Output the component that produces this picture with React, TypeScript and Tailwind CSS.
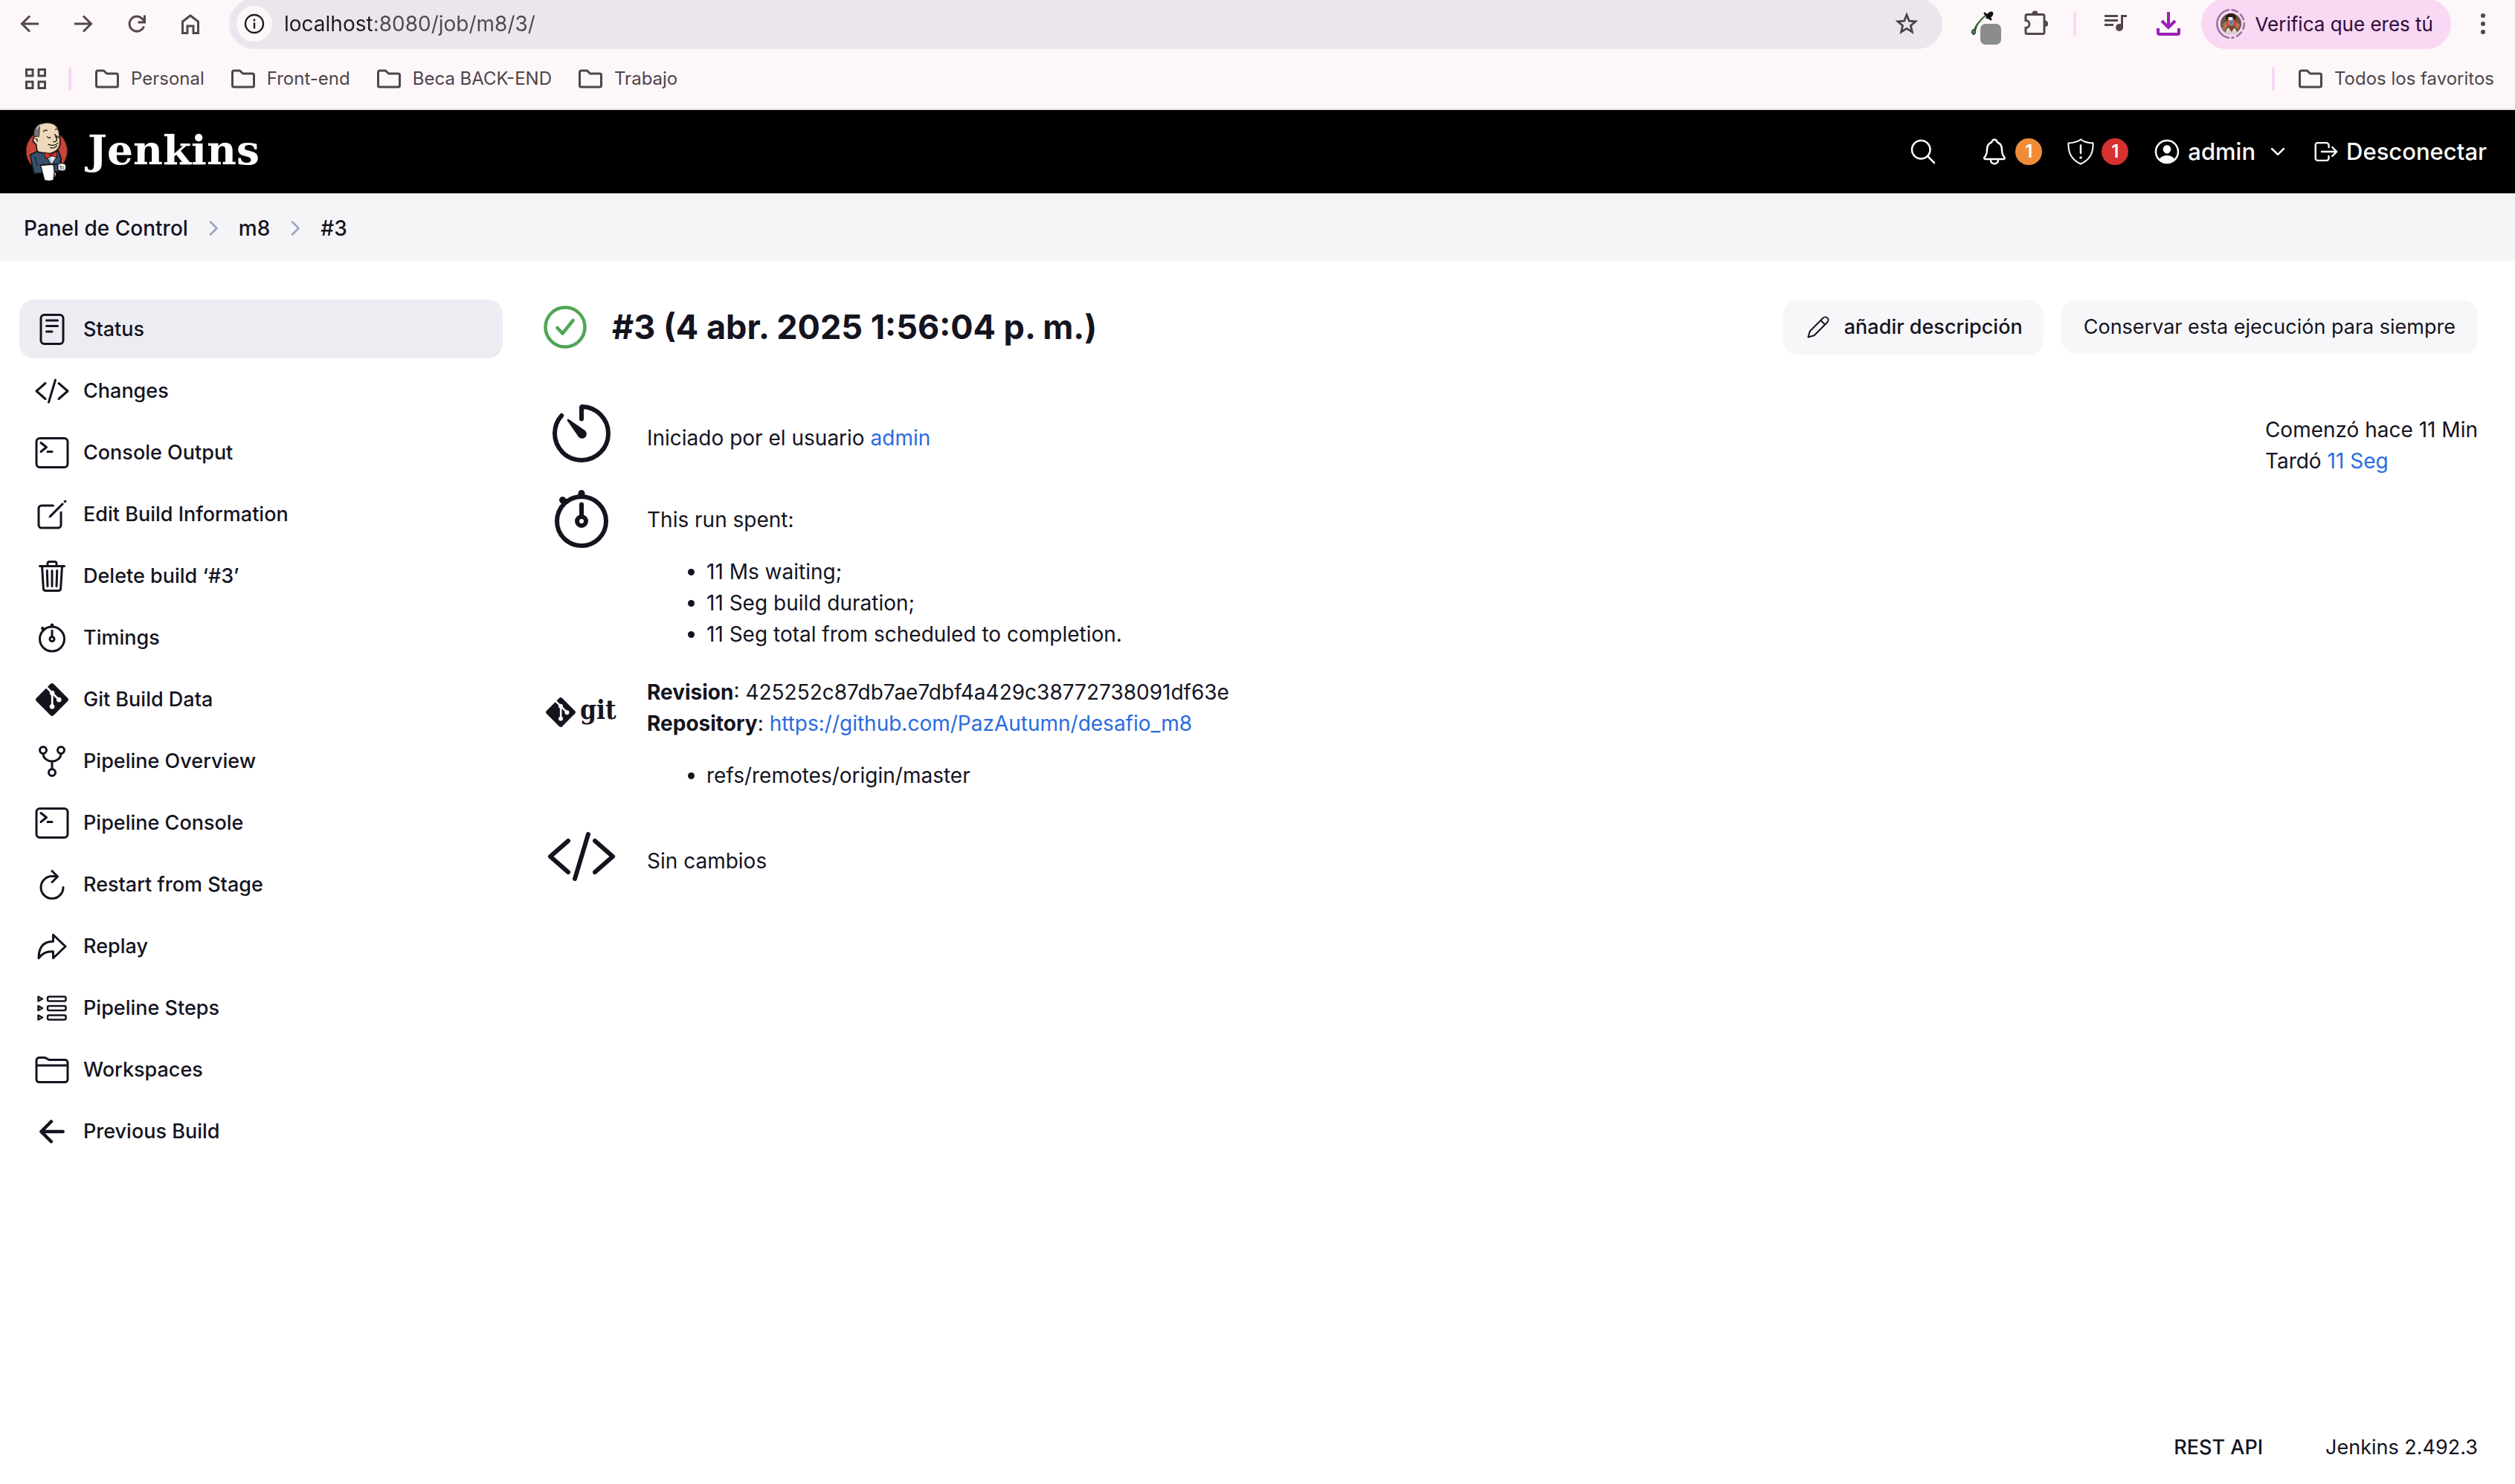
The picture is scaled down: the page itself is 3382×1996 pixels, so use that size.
import React from 'react';
import {
  IoArrowBack,
  IoArrowRedoOutline,
  IoChevronDown,
  IoCodeSlashOutline,
  IoCreateOutline,
  IoFolderOutline,
  IoGitNetworkOutline,
  IoLogOutOutline,
  IoNotificationsOutline,
  IoPersonCircleOutline,
  IoReaderOutline,
  IoRefreshOutline,
  IoSearchOutline,
  IoStopwatchOutline,
  IoTerminalOutline,
  IoTimerOutline,
  IoTrashOutline,
} from 'react-icons/io5';
import { SiGit } from 'react-icons/si';

/* ---------- Browser chrome icons ---------- */

function Glyph({ children, className = 'size-10' }: { children: React.ReactNode; className?: string }) {
  return (
    <svg viewBox="0 0 40 40" className={className} fill="none" stroke="currentColor" strokeWidth="3" aria-hidden="true">
      {children}
    </svg>
  );
}

const BackGlyph = () => (
  <Glyph>
    <path d="M32 20H10M20 9.5 9.5 20 20 30.5" />
  </Glyph>
);

const ForwardGlyph = () => (
  <Glyph>
    <path d="M8 20h22M20 9.5 30.5 20 20 30.5" />
  </Glyph>
);

const ReloadGlyph = () => (
  <Glyph>
    <path d="M29.5 23.5A10 10 0 1 1 28.6 14.8L31 17.5" />
    <path d="M30.5 8.500v9.500H21.500" />
  </Glyph>
);

const HomeGlyph = () => (
  <Glyph>
    <path d="M9.500 17 20 9l10.500 8v15.500H24V23h-8v9.500H9.500Z" />
  </Glyph>
);

const InfoGlyph = () => (
  <Glyph className="size-8">
    <circle cx="20" cy="20" r="15" />
    <path d="M20 18v10M20 12v3.500" />
  </Glyph>
);

const StarGlyph = () => (
  <Glyph>
    <path d="m20 8 3.300 8.100 8.700.700-6.600 5.700 2 8.500L20 26.400 12.600 31l2-8.500L8 16.800l8.700-.7Z" strokeWidth="2.800" />
  </Glyph>
);

const PuzzleGlyph = () => (
  <Glyph>
    <path d="M8 15.500V9.500a2 2 0 0 1 2-2h21a2 2 0 0 1 2 2v22a2 2 0 0 1-2 2H10a2 2 0 0 1-2-2v-6a5 5 0 0 0 0-10Z" />
    <path d="M16.500 6.500a4 4 0 0 1 8 0ZM34 15.800a4 4 0 0 1 0 8.200Z" fill="currentColor" stroke="none" />
  </Glyph>
);

const EyedropperGlyph = () => (
  <svg viewBox="0 0 64 64" className="size-16" fill="none" aria-hidden="true">
    <path d="M16 40c0-4 8-14 16-20" stroke="#2f5a38" strokeWidth="3" strokeLinecap="round" />
    <path d="M19 36c3-5 7-10 12-14" stroke="#d9f0da" strokeWidth="1.500" />
    <path d="m29 18 8 8" stroke="#111" strokeWidth="3" strokeLinecap="round" />
    <ellipse cx="35.500" cy="20.500" rx="6" ry="3.500" transform="rotate(-45 35.500 20.500)" fill="#111" />
    <ellipse cx="14" cy="43" rx="2.500" ry="3.500" fill="#3f8a4c" stroke="#222" strokeWidth="1" />
    <rect x="23" y="32" width="28" height="28" rx="7" fill="#8a8c8d" />
  </svg>
);

const MusicGlyph = () => (
  <Glyph>
    <path d="M6 9.500h18M6 15.500h18M6 21.500h12" />
    <path d="M29.500 25V9.500H36" />
    <circle cx="26" cy="25" r="5" fill="currentColor" stroke="none" />
  </Glyph>
);

const DownloadGlyph = () => (
  <Glyph>
    <path d="M20 4v21M11 16l9 9 9-9" strokeWidth="4" />
    <path d="M6 26v6a2 2 0 0 0 2 2h24a2 2 0 0 0 2-2v-6" strokeWidth="4" />
  </Glyph>
);

const AppsGlyph = () => (
  <svg viewBox="0 0 32 32" className="size-8" fill="none" stroke="currentColor" strokeWidth="3" aria-hidden="true">
    <path d="M3.500 3.500h8.500v8.500H3.500ZM20 3.500h8.500v8.500H20ZM3.500 20h8.500v8.500H3.500ZM20 20h8.500v8.500H20Z" />
  </svg>
);

const FolderGlyph = () => (
  <svg viewBox="0 0 32 26" className="h-[26px] w-8" fill="none" stroke="currentColor" strokeWidth="3" aria-hidden="true">
    <path d="M1.500 4a2 2 0 0 1 2-2h8l4 4h13a2 2 0 0 1 2 2v14a2 2 0 0 1-2 2h-25a2 2 0 0 1-2-2Z" strokeLinejoin="round" />
  </svg>
);

const Avatar = () => (
  <svg viewBox="0 0 40 40" className="size-10" aria-hidden="true">
    <path d="M17 1.300A19 19 0 0 0 17 38.700" fill="none" stroke="#9a6f9c" strokeWidth="2.500" strokeLinecap="round" />
    <path d="M21.500 1.200A19 19 0 0 1 21.500 38.800" fill="none" stroke="#9a6f9c" strokeWidth="2.500" strokeLinecap="round" strokeDasharray="8 5" />
    <clipPath id="face">
      <circle cx="20" cy="20" r="14" />
    </clipPath>
    <g clipPath="url(#face)">
      <rect width="40" height="40" fill="#6b5444" />
      <rect x="4" y="24" width="8" height="12" fill="#8a7a5a" />
      <path d="M12 38c0-9 3-14 8-14s9 5 9 14Z" fill="#d9d4d0" />
      <ellipse cx="20" cy="12" rx="7" ry="6.500" fill="#2b1a14" />
      <path d="M16 24h9l-4 7Z" fill="#7a3d25" />
      <rect x="15" y="14" width="11" height="9" rx="1.500" fill="#d8432f" />
      <rect x="16.500" y="11" width="6" height="4" fill="#f4f0ee" />
      <circle cx="20.500" cy="18.500" r="3.600" fill="#4aa3d8" />
      <circle cx="20.500" cy="18.500" r="1.400" fill="#d5392c" />
      <path d="M9 20l6-3v7l-4 4ZM27 17l5 4-2 6-4-3Z" fill="#b87452" />
    </g>
  </svg>
);

/* ---------- Jenkins icons ---------- */

const JenkinsLogo = () => (
  <svg viewBox="42 26 176 246" className="h-[82px] w-[59px]" strokeLinejoin="round" strokeLinecap="round" aria-hidden="true">
    <ellipse cx="131" cy="146" rx="83" ry="84" fill="#c9453a" stroke="#5b2320" strokeWidth="3" />
    <path d="M80 238 64 162l30-15 34 2 50-4 12 34-8 50Z" fill="#35506a" stroke="#141414" strokeWidth="5" />
    <path d="M96 150C84 138 96 122 84 116 72 110 74 92 84 88c-2-30 14-54 44-56 36-2 52 18 54 46 2 22 8 44-4 58-8 12-30 24-48 20-16-2-26-4-34-6Z" fill="#edd8b9" stroke="#1d1613" strokeWidth="5" />
    <path d="M82 90C74 66 86 42 108 36c-8 8-6 14-6 22-2 14 0 20-4 32-4-4-10-4-16 0Z" fill="#77777d" stroke="#2a2626" strokeWidth="3" />
    <path d="M92 56c4-8 10-14 18-17" stroke="#c9c9cb" strokeWidth="4" fill="none" />
    <path d="M118 68c4-7 9-7 14-4M166 60c5-4 10-2 13 2M134 88c2 7 8 7 12 3M172 84c-2 8 6 8 10 4M164 78c2 12 8 16 8 24-2 6-8 8-14 6M138 120c10 4 28 6 38-6M146 132c8 4 18 2 26-6M86 98c6-2 8 4 6 10" stroke="#1d1613" strokeWidth="4" fill="none" />
    <path d="M132 172 150 204l22-34-20-8Z" fill="#a9c6da" stroke="#141414" strokeWidth="3" />
    <path d="M146 164l6 28 12-26Z" fill="#f5f5f5" />
    <path d="M122 152l26 6 22-8 4 22-22-6-24 12Z" fill="#d8332b" stroke="#3a1210" strokeWidth="3" />
    <circle cx="149" cy="162" r="6" fill="#b5221c" stroke="#3a1210" strokeWidth="2" />
    <path d="M106 204l52-4 4 30-4 34c-12 4-26 4-36 0Z" fill="#fff" stroke="#141414" strokeWidth="4" />
    <path d="M104 204c24-4 46-6 70-4" stroke="#141414" strokeWidth="4" fill="none" />
    <path d="M162 234l6 2-4 18Z" fill="#ddd" />
    <path d="M176 200c8-6 30-6 32 4 2 10 2 18-6 22-10 2-24 0-26-4Z" fill="#f4f4f4" stroke="#141414" strokeWidth="4" />
    <path d="M186 204v14M188 210h12M190 218h10" stroke="#555" strokeWidth="3" />
    <path d="M84 170l8 34M178 150l12 26-6 16" stroke="#141414" strokeWidth="3" fill="none" />
  </svg>
);

const ShieldIcon = () => (
  <svg viewBox="0 0 36 36" className="size-9" fill="none" stroke="currentColor" strokeWidth="2" strokeLinecap="round" strokeLinejoin="round" aria-hidden="true">
    <path d="M18 1.500C14 4.800 8 6.200 1.500 6.500.8 19.500 6.500 29.500 18 34.500 29.500 29.500 35.200 19.500 34.500 6.500 28 6.200 22 4.800 18 1.500Z" />
    <path d="M18 9.500v10.500" strokeWidth="2.500" />
    <circle cx="18" cy="26" r="1.800" fill="currentColor" stroke="none" />
  </svg>
);

const StepsIcon = ({ className = '' }: { className?: string }) => (
  <svg viewBox="0 0 48 48" className={className} fill="none" stroke="currentColor" strokeWidth="2.500" strokeLinejoin="round" aria-hidden="true">
    {[11.5, 24, 36.5].map((y) => (
      <g key={y}>
        <path d={`M5.500 ${y - 3}v6l5.500-3Z`} />
        <rect x="18" y={y - 3} width="24.500" height="6" rx="2" />
      </g>
    ))}
  </svg>
);

const GitIcon = ({ className = '' }: { className?: string }) => (
  <span className={`flex items-center justify-center ${className}`}>
    <SiGit className="size-11" />
  </span>
);

const PencilIcon = () => (
  <svg viewBox="0 0 30 30" className="size-[30px]" fill="none" stroke="currentColor" strokeWidth="2" strokeLinejoin="round" aria-hidden="true">
    <path d="M1.500 28.500 3.800 20.500 21.500 2.800c4-4 9.700 1.700 5.700 5.700L9.500 26.200Z" />
    <path d="M18.500 6l5.500 5.500" />
  </svg>
);

const SuccessIcon = () => (
  <svg viewBox="0 0 58 58" className="size-[58px] shrink-0" fill="none" stroke="#4ea654" strokeWidth="4.500" strokeLinecap="round" strokeLinejoin="round" role="img" aria-label="Success">
    <circle cx="29" cy="29" r="26.500" />
    <path d="m18.500 30 7 7.500L39.500 20" />
  </svg>
);

const CrumbChevron = () => (
  <svg viewBox="0 0 12 20" className="h-5 w-3" fill="none" stroke="#9aa5c0" strokeWidth="2.500" strokeLinecap="round" strokeLinejoin="round" aria-hidden="true">
    <path d="m2 1.500 8.500 8.500L2 18.500" />
  </svg>
);

/* ---------- Data ---------- */

const bookmarks = ['Personal', 'Front-end', 'Beca BACK-END', 'Trabajo'];

const tasks: { label: string; Icon: React.ComponentType<{ className?: string }> }[] = [
  { label: 'Status', Icon: IoReaderOutline },
  { label: 'Changes', Icon: IoCodeSlashOutline },
  { label: 'Console Output', Icon: IoTerminalOutline },
  { label: 'Edit Build Information', Icon: IoCreateOutline },
  { label: 'Delete build ‘#3’', Icon: IoTrashOutline },
  { label: 'Timings', Icon: IoStopwatchOutline },
  { label: 'Git Build Data', Icon: GitIcon },
  { label: 'Pipeline Overview', Icon: IoGitNetworkOutline },
  { label: 'Pipeline Console', Icon: IoTerminalOutline },
  { label: 'Restart from Stage', Icon: IoRefreshOutline },
  { label: 'Replay', Icon: IoArrowRedoOutline },
  { label: 'Pipeline Steps', Icon: StepsIcon },
  { label: 'Workspaces', Icon: IoFolderOutline },
  { label: 'Previous Build', Icon: IoArrowBack },
];

/* ---------- Sections ---------- */

function ToolButton({ label, className = 'w-[72px]', children }: { label: string; className?: string; children: React.ReactNode }) {
  return (
    <button type="button" aria-label={label} className={`flex h-16 shrink-0 items-center justify-center ${className}`}>
      {children}
    </button>
  );
}

function BrowserChrome() {
  return (
    <div className="overflow-hidden border-b-2 border-[#e8dde1] bg-[#fdf7f9] text-[#544650]">
      <div className="-mt-0.5 flex h-[68px] items-center pl-1">
        <ToolButton label="Atrás"><BackGlyph /></ToolButton>
        <ToolButton label="Adelante"><ForwardGlyph /></ToolButton>
        <ToolButton label="Recargar"><ReloadGlyph /></ToolButton>
        <ToolButton label="Inicio"><HomeGlyph /></ToolButton>
        <div className="ml-4 flex h-[68px] min-w-0 flex-1 items-center rounded-full bg-[#ece5ed] pr-7 pl-2.5">
          <button type="button" aria-label="Información del sitio" className="flex size-12 items-center justify-center rounded-full bg-[#fdf7f9] text-[#1e1a1f]">
            <InfoGlyph />
          </button>
          <input
            aria-label="Dirección"
            defaultValue="localhost:8080/job/m8/3/"
            className="ml-4 h-12 min-w-0 flex-1 bg-[linear-gradient(90deg,#1e1a1f_118px,#51474f_118px)] bg-clip-text text-[28px] text-transparent outline-none"
          />
          <button type="button" aria-label="Añadir a favoritos" className="text-[#4b434a]"><StarGlyph /></button>
        </div>
        <ToolButton label="Extensión de color" className="ml-7 w-16"><EyedropperGlyph /></ToolButton>
        <ToolButton label="Extensiones" className="w-16"><PuzzleGlyph /></ToolButton>
        <div className="mr-4 ml-5 h-8 w-1 rounded-full bg-[#f8d8f3]" />
        <ToolButton label="Controles multimedia"><MusicGlyph /></ToolButton>
        <ToolButton label="Descargas"><span className="text-[#9d1cb8]"><DownloadGlyph /></span></ToolButton>
        <button type="button" className="ml-2 flex h-[68px] items-center gap-3 rounded-full bg-[#f8d8f3] pr-6 pl-5 text-[26px] whitespace-nowrap text-[#2f0a3a]">
          <Avatar />
          Verifica que eres tú
        </button>
        <ToolButton label="Menú" className="w-[86px]">
          <Glyph>
            <g fill="currentColor" stroke="none">
              <circle cx="20" cy="9" r="3" />
              <circle cx="20" cy="20" r="3" />
              <circle cx="20" cy="31" r="3" />
            </g>
          </Glyph>
        </ToolButton>
      </div>
      <div className="flex h-20 items-center pr-7 pl-8 text-[24px] text-[#4d454b]">
        <button type="button" aria-label="Aplicaciones"><AppsGlyph /></button>
        <div className="mr-8 ml-7 h-8 w-1 rounded-full bg-[#f8d8f3]" />
        <div className="flex items-center gap-9">
          {bookmarks.map((name) => (
            <button key={name} type="button" className="flex items-center gap-4">
              <FolderGlyph />
              {name}
            </button>
          ))}
        </div>
        <div className="mr-8 ml-auto h-8 w-1 rounded-full bg-[#f8d8f3]" />
        <button type="button" className="flex items-center gap-4">
          <FolderGlyph />
          Todos los favoritos
        </button>
      </div>
    </div>
  );
}

function Header() {
  return (
    <header className="flex h-28 items-center bg-black pr-[38px] pl-[33px] text-[31px] font-medium text-white">
      <a href="#" className="flex items-center gap-[26px]">
        <JenkinsLogo />
        <span className="pb-1 font-['DejaVu_Serif',serif] text-[55px] leading-[80px] font-bold">Jenkins</span>
      </a>
      <div className="ml-auto flex items-center">
        <button type="button" aria-label="Buscar" className="mr-14"><IoSearchOutline className="size-10" /></button>
        <a href="#" className="mr-[34px] flex items-center gap-2" aria-label="Notificaciones">
          <IoNotificationsOutline className="size-10" />
          <span className="flex size-9 items-center justify-center rounded-full bg-[#f08c38] text-[24px] font-semibold">1</span>
        </a>
        <a href="#" className="mr-8 flex items-center gap-2.5" aria-label="Avisos de seguridad">
          <ShieldIcon />
          <span className="flex size-9 items-center justify-center rounded-full bg-[#d63031] text-[24px] font-semibold">1</span>
        </a>
        <button type="button" className="mr-8 flex items-center gap-2">
          <IoPersonCircleOutline className="size-10" />
          admin
          <IoChevronDown className="ml-2 size-7" />
        </button>
        <a href="#" className="flex items-center gap-2">
          <IoLogOutOutline className="size-[38px]" />
          Desconectar
        </a>
      </div>
    </header>
  );
}

function Breadcrumbs() {
  return (
    <nav aria-label="Ruta" className="flex h-[91px] items-center gap-7 bg-[#f5f5f8] pt-0.5 pl-8 text-[28px] font-medium">
      <a href="#">Panel de Control</a>
      <CrumbChevron />
      <a href="#">m8</a>
      <CrumbChevron />
      <a href="#">#3</a>
    </nav>
  );
}

function Sidebar() {
  return (
    <nav aria-label="Tareas" className="flex w-[650px] shrink-0 flex-col gap-1 text-[27px] font-medium">
      {tasks.map(({ label, Icon }, i) => (
        <a
          key={label}
          href="#"
          className={`flex h-[79px] items-center gap-[18px] rounded-[20px] pl-5 ${i === 0 ? 'bg-[#ecedf3]' : ''}`}
        >
          <Icon className="size-12 shrink-0" />
          <span className="pt-0.5">{label}</span>
        </a>
      ))}
    </nav>
  );
}

function Build() {
  return (
    <main className="min-w-0 flex-1">
      <div className="flex h-[74px] items-center">
        <SuccessIcon />
        <h1 className="ml-[34px] text-[45px] leading-[60px] font-bold">#3 (4 abr. 2025 1:56:04 p. m.)</h1>
        <div className="ml-auto flex items-center gap-6 text-[27px]">
          <button type="button" className="flex h-[74px] items-center gap-5 rounded-[20px] bg-[#f7f7fa] pr-7 pl-8 font-medium">
            <PencilIcon />
            añadir descripción
          </button>
          <button type="button" className="h-[72px] rounded-[20px] bg-[#f7f7fa] px-[30px]">
            Conservar esta ejecución para siempre
          </button>
        </div>
      </div>

      <div className="mt-[58px] flex items-start justify-between pl-[3px] text-[28px] leading-[42px]">
        <div>
          <div className="flex gap-10">
            <IoTimerOutline className="size-24 shrink-0" />
            <p className="pt-[33px]">
              Iniciado por el usuario <a href="#" className="text-[#2a6be0]">admin</a>
            </p>
          </div>
          <div className="mt-[19px] flex gap-10">
            <IoStopwatchOutline className="size-24 shrink-0" />
            <div className="pt-7">
              <p>This run spent:</p>
              <ul className="mt-7 list-disc pl-20">
                <li>11 Ms waiting;</li>
                <li>11 Seg build duration;</li>
                <li>11 Seg total from scheduled to completion.</li>
              </ul>
            </div>
          </div>
          <div className="mt-9 flex gap-10">
            <div className="flex h-24 w-24 shrink-0 items-center gap-1.5">
              <SiGit className="size-10 shrink-0" />
              <span className="pb-1.5 font-['DejaVu_Serif_Condensed','DejaVu_Serif',serif] text-[35px] font-bold">git</span>
            </div>
            <div>
              <p>
                <b>Revision</b>: 425252c87db7ae7dbf4a429c38772738091df63e
              </p>
              <p>
                <b>Repository</b>: <a href="#" className="text-[#2a6be0]">https://github.com/PazAutumn/desafio_m8</a>
              </p>
              <ul className="mt-7 list-disc pl-20">
                <li>refs/remotes/origin/master</li>
              </ul>
            </div>
          </div>
          <div className="mt-10 flex gap-10">
            <IoCodeSlashOutline className="size-24 shrink-0" />
            <p className="pt-[33px]">Sin cambios</p>
          </div>
        </div>
        <div className="pt-[22px]">
          <p>Comenzó hace 11 Min</p>
          <p>
            Tardó <a href="#" className="text-[#2a6be0]">11 Seg</a>
          </p>
        </div>
      </div>
    </main>
  );
}

export default function App() {
  return (
    <div className="flex min-h-screen flex-col bg-white font-['Inter',sans-serif] text-[#14141f]">
      <BrowserChrome />
      <Header />
      <Breadcrumbs />
      <div className="flex flex-1 gap-[55px] pt-[52px] pr-[50px] pl-[26px]">
        <Sidebar />
        <Build />
      </div>
      <footer className="flex justify-end gap-[84px] pr-[50px] pb-7 text-[27px] leading-[42px]">
        <a href="#" className="font-medium">REST API</a>
        <a href="#">Jenkins 2.492.3</a>
      </footer>
    </div>
  );
}
